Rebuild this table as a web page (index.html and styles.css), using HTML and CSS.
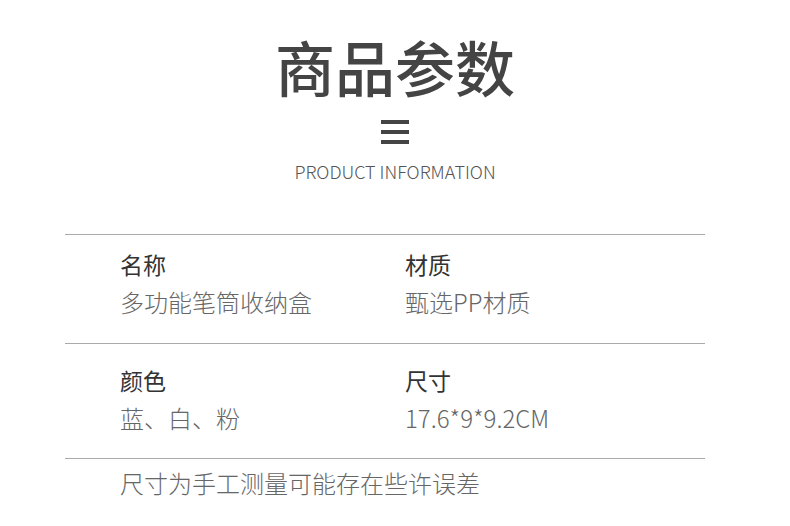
FILE: index.html
```html
<!DOCTYPE html>
<html lang="zh-CN">
<head>
    <meta charset="UTF-8">
    <title>商品参数</title>
    <link rel="stylesheet" href="styles.css">
</head>
<body>
    <!-- Шапка блока -->
    <div class="head">
        <h1 class="title">商品参数</h1>
        <div class="bars">
            <span></span>
            <span></span>
            <span></span>
        </div>
        <div class="subtitle">PRODUCT INFORMATION</div>
    </div>

    <!-- Таблица параметров -->
    <div class="params">
        <div class="row">
            <div class="cell">
                <div class="label">名称</div>
                <div class="value">多功能笔筒收纳盒</div>
            </div>
            <div class="cell">
                <div class="label">材质</div>
                <div class="value">甄选PP材质</div>
            </div>
        </div>
        <div class="row row-low">
            <div class="cell">
                <div class="label">颜色</div>
                <div class="value">蓝、白、粉</div>
            </div>
            <div class="cell">
                <div class="label">尺寸</div>
                <div class="value">17.6*9*9.2CM</div>
            </div>
        </div>
        <div class="note">尺寸为手工测量可能存在些许误差</div>
    </div>
</body>
</html>
```

FILE: styles.css
```css
/* Страница */
body {
    margin: 0;
    background: #fff;
    font-family: "Noto Sans CJK SC", "Noto Sans", sans-serif;
    color: #333;
}

/* Шапка */
.head {
    display: flex;
    flex-direction: column;
    align-items: center;
    padding-top: 31px;
}

.title {
    margin: 0;
    font-size: 60px;
    line-height: 70px;
    font-weight: 500;
    color: #444;
}

/* Иконка из трёх полос */
.bars {
    display: flex;
    flex-direction: column;
    gap: 6px;
    margin-top: 19px;
}

.bars span {
    display: block;
    width: 28px;
    height: 4px;
    background: #444;
}

.subtitle {
    margin-top: 15px;
    font-size: 18px;
    line-height: 24px;
    font-weight: 300;
    color: #555;
}

/* Параметры */
.params {
    margin: 51px 85px 0 65px;
}

.row {
    display: grid;
    grid-template-columns: 285px 1fr;
    padding: 10px 0 23px 55px;
    border-top: 1px solid #aaa;
}

/* Второй ряд чуть выше */
.row-low {
    padding: 17px 0 22px 55px;
}

.label {
    font-size: 23px;
    line-height: 39px;
    color: #333;
}

.value {
    font-size: 24px;
    line-height: 36px;
    font-weight: 300;
    color: #666;
}

.note {
    border-top: 1px solid #aaa;
    padding: 6px 0 0 55px;
    font-size: 24px;
    line-height: 36px;
    font-weight: 300;
    color: #666;
}
```
